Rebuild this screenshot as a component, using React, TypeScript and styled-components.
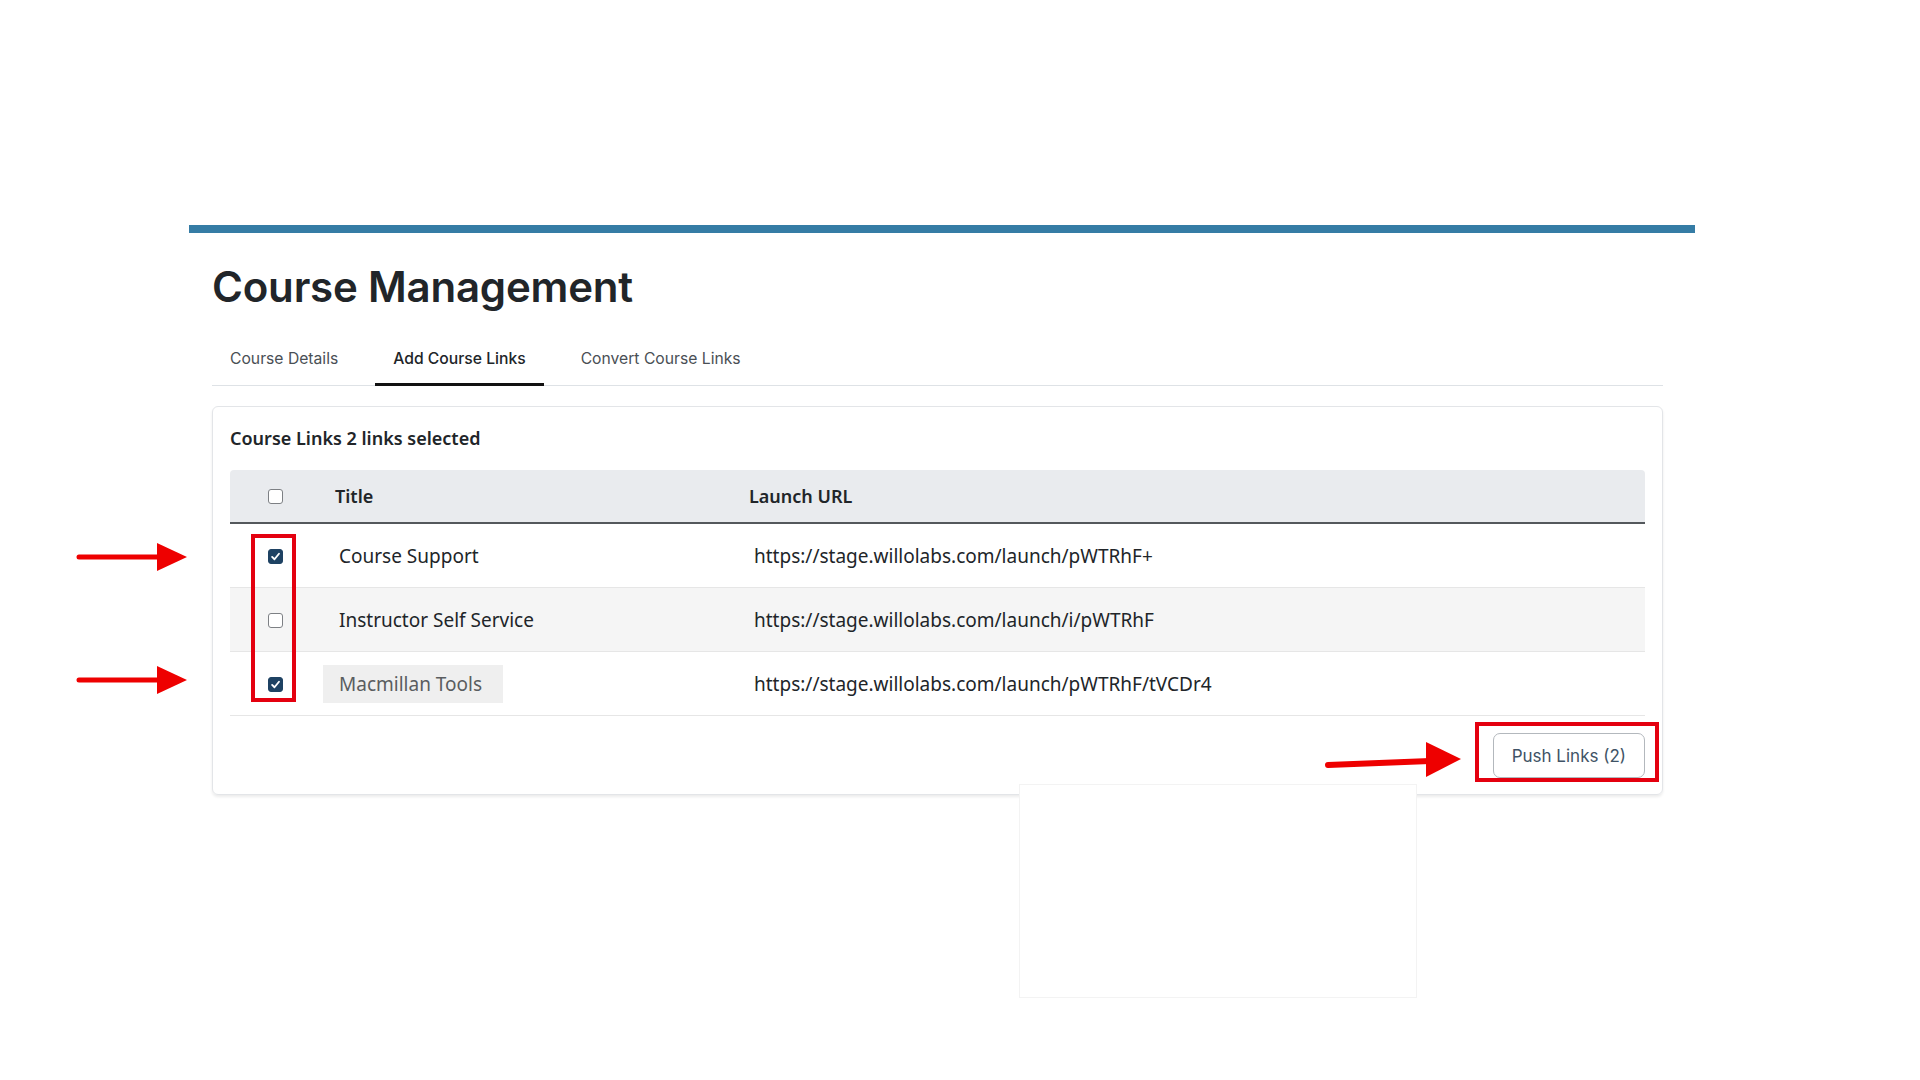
import React from 'react'
import styled, { createGlobalStyle } from 'styled-components'

const GlobalStyle = createGlobalStyle`
  html, body {
    margin: 0;
    padding: 0;
    background: #ffffff;
  }
  body {
    font-family: Inter, 'Liberation Sans', sans-serif;
    color: #212529;
  }
`

const Page = styled.div`
  position: relative;
  width: 1920px;
  height: 1080px;
  overflow: hidden;
  padding-top: 225px;
  box-sizing: border-box;
`

const Shell = styled.div`
  margin-left: 189px;
  width: 1506px;
  border-top: 8px solid #357ca5;
  padding: 0 32px 0 23px;
  box-sizing: border-box;
`

const Heading = styled.h1`
  margin: 28px 0 0;
  font-size: 42px;
  line-height: 52px;
  font-weight: 600;
  color: #212529;
  letter-spacing: -0.2px;
`

const TabBar = styled.div`
  display: flex;
  margin-top: 17px;
  border-bottom: 1px solid #dee2e6;
`

const Tab = styled.div<{ $active?: boolean }>`
  padding: 0 18px;
  height: 56px;
  box-sizing: border-box;
  padding-top: 3px;
  display: flex;
  align-items: center;
  font-size: 15.7px;
  color: ${({ $active }) => ($active ? '#212529' : '#4a4f55')};
  font-weight: ${({ $active }) => ($active ? 500 : 400)};
  border-bottom: 3px solid ${({ $active }) => ($active ? '#111' : 'transparent')};
  margin-bottom: -1px;
  margin-right: 19px;
`

const Card = styled.section`
  margin-top: 20px;
  border: 1px solid #e3e5e8;
  border-radius: 6px;
  box-shadow: 0 2px 3px rgba(0, 0, 0, 0.08);
  padding: 18px 17px 16px;
`

const CardTitle = styled.div`
  font-family: 'Noto Sans', sans-serif;
  font-size: 18px;
  font-weight: 600;
  line-height: 26px;
  color: #212529;
`

const Table = styled.div`
  margin-top: 19px;
  font-family: 'Noto Sans', sans-serif;
`

const HeadRow = styled.div`
  display: grid;
  grid-template-columns: 90px 420px 1fr;
  align-items: center;
  height: 52px;
  background: #e9ebee;
  border-bottom: 2px solid #54585c;
  border-radius: 4px 4px 0 0;
  font-size: 18px;
  font-weight: 600;
`

const Row = styled.div<{ $shade?: boolean }>`
  display: grid;
  grid-template-columns: 90px 420px 1fr;
  align-items: center;
  height: 63px;
  background: ${({ $shade }) => ($shade ? '#f5f5f5' : '#ffffff')};
  border-bottom: 1px solid #e6e6e6;
  font-size: 19px;
  color: #212529;
`

const BoxCell = styled.div`
  display: flex;
  justify-content: center;
  align-items: center;
`

const Cell = styled.div<{ $pad: number }>`
  padding-left: ${({ $pad }) => $pad}px;
  white-space: nowrap;
`

const Check = styled.span<{ $on?: boolean }>`
  width: 15px;
  height: 15px;
  box-sizing: border-box;
  border-radius: 3px;
  border: 1px solid ${({ $on }) => ($on ? '#1e4263' : '#7d8084')};
  background: ${({ $on }) => ($on ? '#1e4263' : '#ffffff')};
  display: inline-flex;
  align-items: center;
  justify-content: center;
  margin-top: 1px;
`

const Plain = styled.span`
  display: inline-block;
  padding: 0 16px;
`

const Boxed = styled.span`
  display: inline-flex;
  align-items: center;
  height: 38px;
  padding: 0 21px 0 16px;
  background: #efefef;
  color: #5a5d60;
`

const Footer = styled.div`
  display: flex;
  justify-content: flex-end;
  padding-top: 17px;
`

const PushButton = styled.button`
  font-family: Inter, 'Liberation Sans', sans-serif;
  font-size: 17px;
  color: #3f5366;
  background: #ffffff;
  border: 1px solid #b3b8bd;
  border-radius: 7px;
  height: 45px;
  padding: 0 18px;
`

const Mark = styled.div<{ $x: number; $y: number; $w: number; $h: number }>`
  position: absolute;
  left: ${({ $x }) => $x}px;
  top: ${({ $y }) => $y}px;
  width: ${({ $w }) => $w}px;
  height: ${({ $h }) => $h}px;
  border: 4px solid #e4000f;
  box-sizing: border-box;
`

const Ghost = styled.div`
  position: absolute;
  left: 1019px;
  top: 784px;
  width: 398px;
  height: 214px;
  background: #ffffff;
  border: 1px solid #f3f3f3;
  box-sizing: border-box;
`

const ArrowSvg = styled.svg`
  position: absolute;
  left: 0;
  top: 0;
  pointer-events: none;
`

const links = [
  { title: 'Course Support', url: 'https://stage.willolabs.com/launch/pWTRhF+', on: true },
  { title: 'Instructor Self Service', url: 'https://stage.willolabs.com/launch/i/pWTRhF', on: false },
  { title: 'Macmillan Tools', url: 'https://stage.willolabs.com/launch/pWTRhF/tVCDr4', on: true, boxed: true },
]

function Tick() {
  return (
    <svg width="11" height="11" viewBox="0 0 12 12">
      <path d="M2.3 6.4 L4.9 9 L9.8 3" fill="none" stroke="#fff" strokeWidth="2" strokeLinecap="round" strokeLinejoin="round" />
    </svg>
  )
}

export default function App() {
  return (
    <Page>
      <GlobalStyle />
      <Shell>
        <Heading>Course Management</Heading>
        <TabBar>
          <Tab>Course Details</Tab>
          <Tab $active>Add Course Links</Tab>
          <Tab>Convert Course Links</Tab>
        </TabBar>
        <Card>
          <CardTitle>Course Links 2 links selected</CardTitle>
          <Table>
            <HeadRow>
              <BoxCell>
                <Check />
              </BoxCell>
              <Cell $pad={15}>Title</Cell>
              <Cell $pad={9}>Launch URL</Cell>
            </HeadRow>
            {links.map((l, i) => (
              <Row key={l.title} $shade={i === 1}>
                <BoxCell>
                  <Check $on={l.on}>{l.on && <Tick />}</Check>
                </BoxCell>
                <Cell $pad={3}>{l.boxed ? <Boxed>{l.title}</Boxed> : <Plain>{l.title}</Plain>}</Cell>
                <Cell $pad={14}>{l.url}</Cell>
              </Row>
            ))}
          </Table>
          <Footer>
            <PushButton>Push Links (2)</PushButton>
          </Footer>
        </Card>
      </Shell>

      <Ghost />
      <Mark $x={251} $y={534} $w={45} $h={168} />
      <Mark $x={1475} $y={722} $w={184} $h={60} />

      <ArrowSvg width="1920" height="1080">
        <g fill="#ee0000" stroke="#ee0000">
          <line x1="79" y1="557" x2="160" y2="557" strokeWidth="5" strokeLinecap="round" />
          <polygon points="157,543 187,557 157,571" stroke="none" />
          <line x1="79" y1="680" x2="160" y2="680" strokeWidth="5" strokeLinecap="round" />
          <polygon points="157,666 187,680 157,694" stroke="none" />
          <line x1="1328" y1="765" x2="1430" y2="761" strokeWidth="6" strokeLinecap="round" />
          <polygon points="1426,742 1461,759 1426,777" stroke="none" />
        </g>
      </ArrowSvg>
    </Page>
  )
}
